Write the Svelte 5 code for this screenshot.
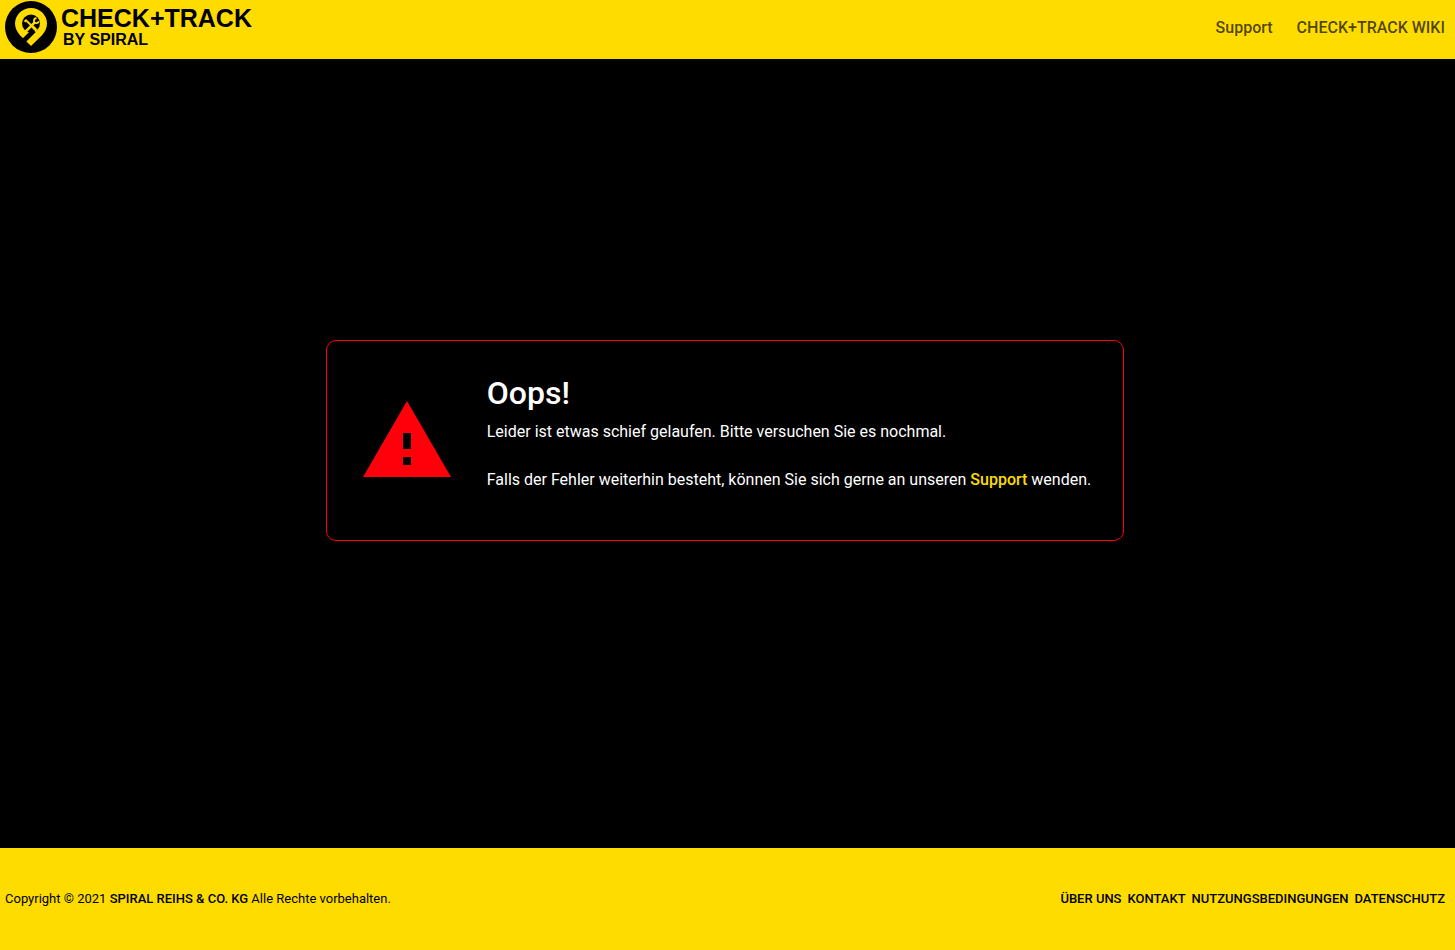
<script lang="ts">
	const headerLinks = [
		{ label: 'Support', href: '#support' },
		{ label: 'CHECK+TRACK WIKI', href: '#wiki' }
	];

	const footerLinks = [
		{ label: 'ÜBER UNS', href: '#ueber-uns' },
		{ label: 'KONTAKT', href: '#kontakt' },
		{ label: 'NUTZUNGSBEDINGUNGEN', href: '#nutzungsbedingungen' },
		{ label: 'DATENSCHUTZ', href: '#datenschutz' }
	];
</script>

<div class="page">
	<header>
		<a class="logo" href="#home">
			<svg width="52" height="52" viewBox="0 0 52 52" aria-hidden="true">
				<circle cx="26" cy="26" r="26" fill="#000" />
				<path
					d="M26 7C17.2 7 10 14 10 22.6c0 4.6 2 8.4 5 11.6L26 45l11-10.800c3-3.200 5-7 5-11.600C42 14 34.800 7 26 7z"
					fill="#ffdc00"
				/>
				<circle cx="26" cy="22.5" r="9" fill="#000" />
				<path d="M29 29.500 18.500 40" stroke="#000" stroke-width="4.600" />
				<!-- screwdriver -->
				<path d="M19.500 20.800 21 19.300 28 26" stroke="#ffdc00" stroke-width="2" fill="none" />
				<path d="M27.500 25.500 31.500 29.500" stroke="#ffdc00" stroke-width="3" />
				<!-- wrench -->
				<path d="M30 21.200 20.500 30.700" stroke="#ffdc00" stroke-width="2.600" />
				<path
					d="M31.600 17.300a2.400 2.400 0 1 0 2.100 2.900"
					stroke="#ffdc00"
					stroke-width="1.800"
					fill="none"
				/>
			</svg>
			<span class="logo-text">
				<span class="logo-title">CHECK+TRACK</span>
				<span class="logo-subtitle">BY SPIRAL</span>
			</span>
		</a>
		<nav class="header-nav">
			{#each headerLinks as link}
				<a href={link.href}>{link.label}</a>
			{/each}
		</nav>
	</header>

	<main>
		<section class="error-card" role="alert">
			<svg class="warning" width="96" height="96" viewBox="0 0 24 24" aria-hidden="true">
				<path d="M1 21h22L12 2 1 21zm12-3h-2v-2h2v2zm0-4h-2v-4h2v4z" fill="#ff000a" />
			</svg>
			<div>
				<h2>Oops!</h2>
				<p>
					Leider ist etwas schief gelaufen. Bitte versuchen Sie es nochmal.<br /><br />
					Falls der Fehler weiterhin besteht, können Sie sich gerne an unseren
					<a href="#support">Support</a> wenden.
				</p>
			</div>
		</section>
	</main>

	<footer>
		<div>Copyright © 2021 <b>SPIRAL REIHS &amp; CO. KG</b> Alle Rechte vorbehalten.</div>
		<nav class="footer-nav">
			{#each footerLinks as link}
				<a href={link.href}>{link.label}</a>
			{/each}
		</nav>
	</footer>
</div>

<style>
	:global(body) {
		margin: 0;
		background: #000;
	}

	.page {
		display: flex;
		flex-direction: column;
		min-height: 100vh;
		font-family: Roboto, 'Liberation Sans', sans-serif;
		font-size: 16px;
		line-height: 24px;
		color: #fff;
	}

	a {
		text-decoration: none;
	}

	header,
	footer {
		display: flex;
		justify-content: space-between;
		align-items: center;
		flex-wrap: wrap;
		background: #ffdc00;
		color: #000;
	}

	header {
		padding: 1px 10px 6px 5px;
	}

	.logo {
		display: flex;
		gap: 4px;
		color: #000;
		font-family: 'Liberation Sans', Arial, sans-serif;
		font-weight: 700;
	}

	.logo-text {
		display: flex;
		flex-direction: column;
		padding-top: 5px;
	}

	.logo-title {
		font-size: 25px;
		line-height: 24px;
	}

	.logo-subtitle {
		padding-left: 2px;
		font-size: 16px;
		line-height: 20px;
	}

	.header-nav {
		display: flex;
		gap: 24px;
		padding-top: 2px;
	}

	.header-nav a {
		color: rgba(0, 0, 0, 0.7);
		font-weight: 500;
	}

	main {
		flex: 1;
		display: flex;
		justify-content: center;
		align-items: center;
		padding: 0 5px 26px 0;
	}

	.error-card {
		display: flex;
		align-items: center;
		gap: 32px;
		padding: 32px;
		border: 1px solid #ff000a;
		border-radius: 10px;
	}

	.warning {
		flex-shrink: 0;
	}

	h2 {
		margin: 0 0 6px;
		font-size: 32px;
		line-height: 41px;
		font-weight: 500;
	}

	p {
		margin: 0 0 16px;
	}

	p a {
		color: #ffdc00;
		font-weight: 500;
	}

	footer {
		padding: 39px 10px 39px 5px;
		font-size: 13px;
	}

	footer b {
		font-weight: 500;
	}

	.footer-nav {
		display: flex;
		gap: 6px;
	}

	.footer-nav a {
		color: #000;
		font-weight: 500;
	}
</style>
